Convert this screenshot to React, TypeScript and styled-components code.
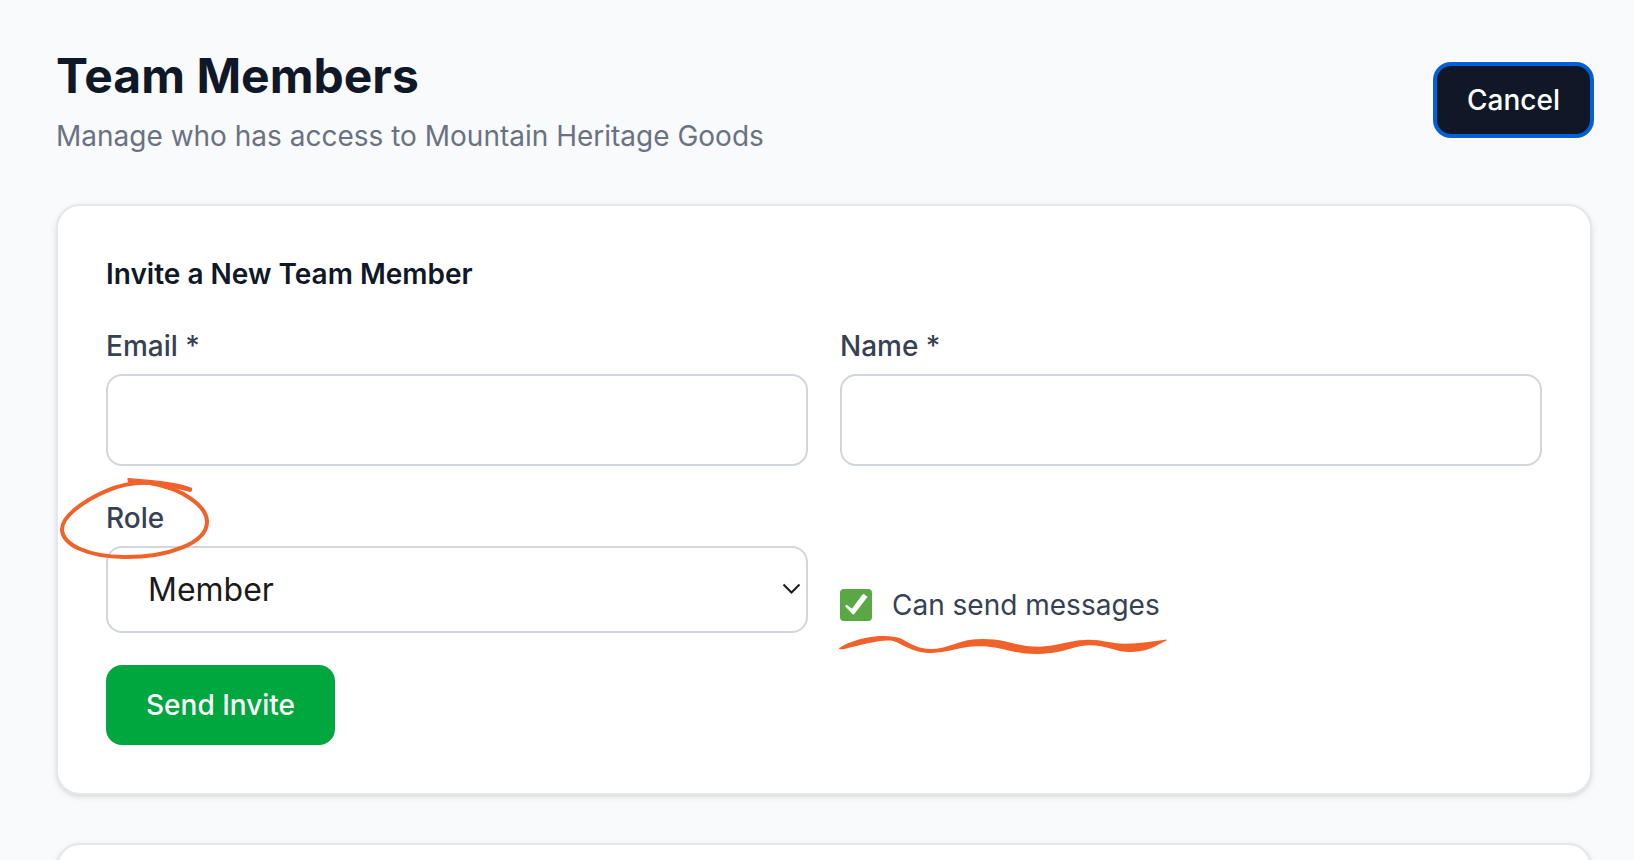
import React from "react";
import styled, { createGlobalStyle } from "styled-components";

const GlobalStyle = createGlobalStyle`
  *, *::before, *::after { box-sizing: border-box; }
  html { scrollbar-width: none; }
  body {
    margin: 0;
    background: #f9fafc;
    color: #101828;
    font-family: Inter, "Liberation Sans", sans-serif;
    font-size: 28px;
    line-height: 40px;
  }
  h1, h2, p { margin: 0; }
  button, input, select { font: inherit; color: inherit; margin: 0; }
`;

const Page = styled.main`
  display: flex;
  flex-direction: column;
  gap: 48px;
  padding: 44px 42px 0 56px;
`;

const Header = styled.header`
  display: flex;
  align-items: center;
  justify-content: space-between;
`;

const Heading = styled.div`
  display: flex;
  flex-direction: column;
  gap: 8px;
`;

const Title = styled.h1`
  font-size: 48px;
  line-height: 64px;
  font-weight: 700;
`;

const Subtitle = styled.p`
  color: #6a7282;
`;

const Button = styled.button<{ $tone: "dark" | "green" }>`
  align-self: ${(p) => (p.$tone === "green" ? "flex-start" : "center")};
  padding: ${(p) => (p.$tone === "green" ? "20px 40px" : "16px 32px")};
  border: 0;
  border-radius: 16px;
  background: ${(p) => (p.$tone === "green" ? "#00a63e" : "#101828")};
  color: #fff;
  font-weight: 500;
  cursor: pointer;
`;

const CancelButton = styled(Button)`
  outline: 4px solid #0060d8;
  outline-offset: -2px;
  box-shadow: 0 0 0 4px #fff;
`;

const Card = styled.section`
  padding: 48px;
  border: 2px solid #e5e7eb;
  border-radius: 24px;
  background: #fff;
  box-shadow: 0 2px 6px rgba(0, 0, 0, 0.1), 0 2px 4px -2px rgba(0, 0, 0, 0.1);
`;

const InviteForm = styled.form`
  display: flex;
  flex-direction: column;
  gap: 32px;
`;

const FormTitle = styled.h2`
  font-size: 28px;
  line-height: 40px;
  font-weight: 600;
`;

const Fields = styled.div`
  display: grid;
  grid-template-columns: 1fr 1fr;
  gap: 32px;
`;

const Field = styled.div`
  display: flex;
  flex-direction: column;
  gap: 8px;
`;

const Label = styled.label`
  position: relative;
  align-self: flex-start;
  color: #364153;
  font-weight: 500;
`;

const TextInput = styled.input`
  width: 100%;
  height: 92px;
  padding: 0 32px;
  border: 2px solid #d1d5dc;
  border-radius: 16px;
  background: #fff;
`;

const SelectBox = styled.div`
  position: relative;
  display: flex;
`;

const Select = styled.select`
  appearance: none;
  width: 100%;
  height: 87px;
  padding: 0 40px;
  border: 2px solid #d1d5dc;
  border-radius: 16px;
  background: #fff;
  color: #1a1a1a;
  font-size: 32px;
`;

const Chevron = styled.svg`
  position: absolute;
  right: 7px;
  top: 37px;
  width: 19px;
  height: 12px;
  pointer-events: none;
`;

const Option = styled.div`
  position: relative;
  display: flex;
  align-items: center;
  align-self: end;
  justify-self: start;
  gap: 20px;
  padding-bottom: 8px;
  color: #364153;
`;

const CheckBox = styled.span`
  position: relative;
  display: flex;
`;

const CheckInput = styled.input`
  appearance: none;
  width: 32px;
  height: 32px;
  border-radius: 4px;
  background: #fff;
  box-shadow: inset 0 0 0 2px #d1d5dc;

  &:checked { background: #59a845; box-shadow: none; }
  &:checked + svg { display: block; }
`;

const Tick = styled.svg`
  display: none;
  position: absolute;
  inset: 0;
  width: 32px;
  height: 32px;
  pointer-events: none;
`;

const Circle = styled.svg`
  position: absolute;
  z-index: 1;
  left: -48px;
  top: -24px;
  width: 156px;
  height: 88px;
  pointer-events: none;
`;

const Squiggle = styled.svg`
  position: absolute;
  left: -2px;
  top: 49px;
  width: 330px;
  height: 22px;
  pointer-events: none;
`;

export default function App() {
  return (
    <>
      <GlobalStyle />
      <Page>
        <Header>
          <Heading>
            <Title>Team Members</Title>
            <Subtitle>Manage who has access to Mountain Heritage Goods</Subtitle>
          </Heading>
          <CancelButton type="button" $tone="dark">Cancel</CancelButton>
        </Header>

        <Card>
          <InviteForm onSubmit={(e) => e.preventDefault()}>
            <FormTitle>Invite a New Team Member</FormTitle>
            <Fields>
              <Field>
                <Label htmlFor="email">Email *</Label>
                <TextInput id="email" type="email" required />
              </Field>
              <Field>
                <Label htmlFor="name">Name *</Label>
                <TextInput id="name" type="text" required />
              </Field>
              <Field>
                <Label htmlFor="role">
                  Role
                  <Circle viewBox="24 42 468 264" fill="none" stroke="#f0622a" strokeLinecap="round" strokeLinejoin="round" aria-hidden="true">
                    <path fill="#f0622a" strokeWidth="4" d="M234 56 C300 62 374 66 424 85 Q426 92 420 94 C396 86 372 82 348 78 C310 72 268 72 236 66 Z" />
                    <path strokeWidth="12" d="M300 69 C250 66 208 76 166 94 C98 124 36 170 36 208 C38 256 116 290 222 291 C352 292 472 250 471 184 C469 138 400 86 300 69" />
                  </Circle>
                </Label>
                <SelectBox>
                  <Select id="role" defaultValue="member">
                    <option value="member">Member</option>
                    <option value="admin">Admin</option>
                  </Select>
                  <Chevron viewBox="0 0 19 12" fill="none" stroke="#1a1a1a" strokeWidth="2" aria-hidden="true">
                    <path d="M1.5 1.5 L9.5 9.5 L17.5 1.5" />
                  </Chevron>
                </SelectBox>
              </Field>
              <Option>
                <CheckBox>
                  <CheckInput id="messages" type="checkbox" defaultChecked />
                  <Tick viewBox="0 0 96 96" aria-hidden="true">
                    <path fill="#fff" d="M15 51 L20 47 L36 59 L67 17 L72 14 L75 19 L83 23 L41 77 L37 75 Z" />
                  </Tick>
                </CheckBox>
                <label htmlFor="messages">Can send messages</label>
                <Squiggle viewBox="24 192 990 66" fill="#f0622a" aria-hidden="true">
                  <path d="M27 235 C46 220 84 208 118 202 C150 196 192 197 214 206 C240 220 262 236 304 237 C344 237 376 219 412 211 C448 205 488 206 524 214 C566 224 584 230 626 230 C684 229 716 211 764 210 C816 207 838 222 886 221 C930 220 970 213 1005 209 C1011 208 1011 211 1007 213 C980 225 960 244 906 246 C858 248 830 226 778 226 C728 227 706 250 626 252 C560 254 526 234 476 230 C394 224 364 249 304 249 C240 248 212 216 186 212 C150 208 96 224 46 236 C36 239 26 238 27 235 Z" />
                </Squiggle>
              </Option>
            </Fields>
            <Button type="submit" $tone="green">Send Invite</Button>
          </InviteForm>
        </Card>

        <Card aria-label="Current team members" />
      </Page>
    </>
  );
}
